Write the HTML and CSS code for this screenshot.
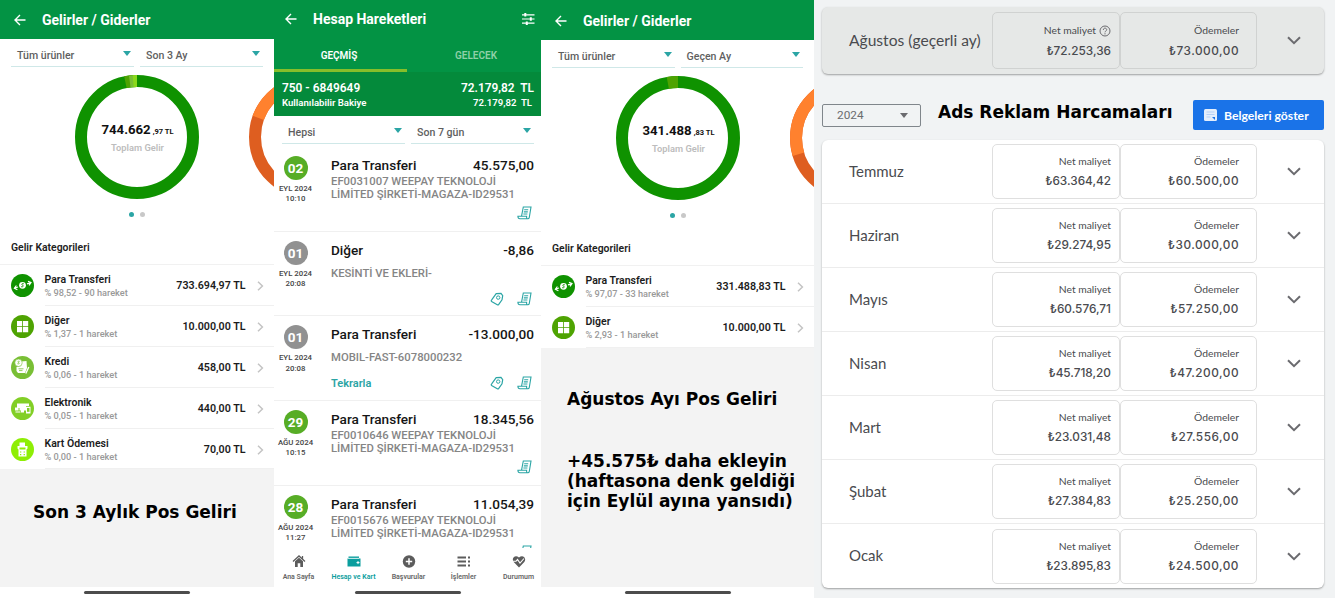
FILE: index.html
```html
<!DOCTYPE html>
<html lang="tr">
<head>
    <meta charset="UTF-8">
    <meta name="viewport" content="width=device-width, initial-scale=1.0">
    <title>Pos Geliri ve Reklam Harcamaları</title>
    <link rel="stylesheet" href="styles.css">
</head>
<body>

    <!-- Shared icons -->
    <svg class="sprite" width="0" height="0">
        <symbol id="back" viewBox="0 0 12 12"><path d="M11.5 6H1M6 1L1 6l5 5" fill="none" stroke="#fff" stroke-width="1.4"/></symbol>
        <symbol id="next" viewBox="0 0 7 10"><path d="M1 .8L5.4 5 1 9.2" fill="none" stroke="#c4c4c4" stroke-width="1.5"/></symbol>
        <symbol id="down" viewBox="0 0 14 9"><path d="M1 1.2l6 6 6-6" fill="none" stroke="#6b6b6f" stroke-width="2"/></symbol>
        <symbol id="transfer" viewBox="0 0 23 23">
            <circle cx="11.5" cy="11.5" r="11.5" fill="#0f9200"/>
            <circle cx="11.5" cy="11.3" r="3.4" fill="#fff"/>
            <path d="M12.8 9.8c-2-.9-2.7.9-1.3 1.3s1 2.2-1.4 1.6" fill="none" stroke="#0f9200" stroke-width=".9"/>
            <path d="M7 13l-3.500 1M5.400 11.500l-2 2.700 3 1.500M16 9.800l3.500-1M17 7.200l3 1.400-2 2.700" fill="none" stroke="#fff" stroke-width="1.2"/>
        </symbol>
        <symbol id="other" viewBox="0 0 23 23">
            <circle cx="11.5" cy="11.5" r="11.5" fill="#4ea302"/>
            <path d="M6 6h5.200v5.200H6zM12 6h5.200v5.200H12zM6 12h5.200v5.200H6zM12 12h5.200v5.200H12z" fill="#fff"/>
        </symbol>
        <symbol id="credit" viewBox="0 0 23 23">
            <circle cx="11.5" cy="11.5" r="11.5" fill="#79bf35"/>
            <path d="M10 5.500l5.500-.5.5 7-2 5H7l-1.500-2V11L10 10z" fill="#fff"/>
            <circle cx="7.500" cy="6.800" r="3.700" fill="#fff" stroke="#79bf35" stroke-width=".6"/>
            <path d="M8.600 5.400c-2-.6-2.200.8-1 1.200s.8 1.600-1.200 1.100M7.500 12.800h5M8 14.600h3.500" fill="none" stroke="#79bf35" stroke-width=".8"/>
            <path d="M17.800 11l-3 6.500" stroke="#fff" stroke-width="1.400"/>
        </symbol>
        <symbol id="electronic" viewBox="0 0 23 23">
            <circle cx="11.5" cy="11.5" r="11.5" fill="#82cf26"/>
            <path d="M6 6.500h12V9h-3v4.500H8.500V11H6zM10 13.500h3v2h-3zM4 10.500h3.500v3H4zM4.500 14.500h5v1h-5zM15 9.800h4.500v6.700H15z" fill="#fff"/>
            <path d="M16 11h2.500v3.800H16z" fill="#82cf26"/>
        </symbol>
        <symbol id="card" viewBox="0 0 23 23">
            <circle cx="11.5" cy="11.5" r="11.5" fill="#8eee05"/>
            <path d="M8.500 4.500h5.500v4H8.500zM6.500 8h10v2.500l-1 1v7h-8v-7l-1-1z" fill="#fff"/>
            <path d="M8.500 9.500h6v2h-6zM9 13.400h1.300v1.200H9zM12.600 13.400h1.300v1.200h-1.300zM9 16h1.300v1.200H9zM12.600 16h1.300v1.200h-1.300z" fill="#8eee05"/>
        </symbol>
        <symbol id="receipt" viewBox="0 0 15 14">
            <path d="M4.600 9.800L6.300 1H14l-1.700 10.300c-.3 2-2.800 2-2.700 0v-1H.9c0 1.700.7 2.500 2 2.500h7.800M7.200 3.800h4M6.800 5.900h4M6.400 8h4" fill="none" stroke="#2ba5a5" stroke-width="1.1"/>
        </symbol>
        <symbol id="tag" viewBox="0 0 14 14">
            <path d="M6.200 1.600l4.800-.2 1.700 2.200-.7 4.200-3.400 4.800c-.4.500-.8.500-1.300.2L1.600 9.400c-.4-.3-.5-.8-.1-1.300z" fill="none" stroke="#2ba5a5" stroke-width="1.2"/>
            <circle cx="8.200" cy="5.600" r="1.700" fill="none" stroke="#2ba5a5"/>
        </symbol>
    </svg>

    <section class="phone income">
        <header class="bar">
            <svg class="back"><use href="#back"/></svg>
            <h1>Gelirler / Giderler</h1>
        </header>
        <div class="filters">
            <div class="filter">Tüm ürünler</div>
            <div class="filter">Son 3 Ay</div>
        </div>
        <div class="chart">
            <svg width="274" height="140" viewBox="0 0 274 140">
                <circle cx="137" cy="70" r="56" fill="none" stroke="#0f9200" stroke-width="12"/>
                <g fill="none" stroke-width="12" transform="rotate(-90 137 70)">
                    <circle cx="137" cy="70" r="56" pathLength="360" stroke="#4ea302" stroke-dasharray="12 348" stroke-dashoffset="12"/>
                    <circle cx="137" cy="70" r="56" pathLength="360" stroke="#79bf35" stroke-dasharray="7.5 352.5" stroke-dashoffset="7.5"/>
                    <circle cx="137" cy="70" r="56" pathLength="360" stroke="#8bd91c" stroke-dasharray="4 356" stroke-dashoffset="4"/>
                </g>
                <g fill="none" stroke-width="12" transform="rotate(-90 311 70)">
                    <circle cx="311" cy="70" r="56" stroke="#de5e20"/>
                    <circle cx="311" cy="70" r="56" pathLength="360" stroke="#ff812e" stroke-dasharray="70 290" stroke-dashoffset="70"/>
                </g>
            </svg>
            <div class="total">
                <p class="sum">744.662<small>,97 TL</small></p>
                <p class="caption">Toplam Gelir</p>
            </div>
        </div>
        <div class="dots"><i class="on"></i><i></i></div>
        <h2>Gelir Kategorileri</h2>
        <ul class="categories">
            <li>
                <svg class="badge"><use href="#transfer"/></svg>
                <div class="line">
                    <div class="name"><b>Para Transferi</b><span>% 98,52 - 90 hareket</span></div>
                    <strong>733.694,97 TL</strong>
                    <svg class="next"><use href="#next"/></svg>
                </div>
            </li>
            <li>
                <svg class="badge"><use href="#other"/></svg>
                <div class="line">
                    <div class="name"><b>Diğer</b><span>% 1,37 - 1 hareket</span></div>
                    <strong>10.000,00 TL</strong>
                    <svg class="next"><use href="#next"/></svg>
                </div>
            </li>
            <li>
                <svg class="badge"><use href="#credit"/></svg>
                <div class="line">
                    <div class="name"><b>Kredi</b><span>% 0,06 - 1 hareket</span></div>
                    <strong>458,00 TL</strong>
                    <svg class="next"><use href="#next"/></svg>
                </div>
            </li>
            <li>
                <svg class="badge"><use href="#electronic"/></svg>
                <div class="line">
                    <div class="name"><b>Elektronik</b><span>% 0,05 - 1 hareket</span></div>
                    <strong>440,00 TL</strong>
                    <svg class="next"><use href="#next"/></svg>
                </div>
            </li>
            <li>
                <svg class="badge"><use href="#card"/></svg>
                <div class="line">
                    <div class="name"><b>Kart Ödemesi</b><span>% 0,00 - 1 hareket</span></div>
                    <strong>70,00 TL</strong>
                    <svg class="next"><use href="#next"/></svg>
                </div>
            </li>
        </ul>
        <div class="notes">
            <p class="note">Son 3 Aylık Pos Geliri</p>
        </div>
        <div class="home"></div>
    </section>

    <section class="phone account">
        <header class="bar">
            <svg class="back"><use href="#back"/></svg>
            <h1>Hesap Hareketleri</h1>
            <svg class="tune" viewBox="0 0 13 12"><path d="M0 1.800h12.500M0 6h12.500M0 10.200h12.500" stroke="#fff" stroke-width="1.2"/><path d="M3.300 0v3.600M8.800 4.200v3.600M4.800 8.400V12" stroke="#fff" stroke-width="2"/></svg>
        </header>
        <nav class="tabs">
            <a class="active">GEÇMİŞ</a>
            <a>GELECEK</a>
        </nav>
        <div class="balance">
            <div class="row big"><span>750 - 6849649</span><span>72.179,82&nbsp; TL</span></div>
            <div class="row"><span>Kullanılabilir Bakiye</span><span>72.179,82&nbsp; TL</span></div>
        </div>
        <div class="filters">
            <div class="filter">Hepsi</div>
            <div class="filter">Son 7 gün</div>
        </div>
        <div class="moves">
            <article class="move">
                <div class="date"><b class="in">02</b><span>EYL 2024</span><span>10:10</span></div>
                <div class="info">
                    <div class="head"><span>Para Transferi</span><span>45.575,00</span></div>
                    <p>EF0031007 WEEPAY TEKNOLOJİ<br>LİMİTED ŞİRKETİ-MAGAZA-ID29531</p>
                    <div class="tools"><svg class="receipt"><use href="#receipt"/></svg></div>
                </div>
            </article>
            <article class="move single">
                <div class="date"><b>01</b><span>EYL 2024</span><span>20:08</span></div>
                <div class="info">
                    <div class="head"><span>Diğer</span><span>-8,86</span></div>
                    <p>KESİNTİ VE EKLERİ-</p>
                    <div class="tools"><svg class="tag"><use href="#tag"/></svg><svg class="receipt"><use href="#receipt"/></svg></div>
                </div>
            </article>
            <article class="move single">
                <div class="date"><b>01</b><span>EYL 2024</span><span>20:08</span></div>
                <div class="info">
                    <div class="head"><span>Para Transferi</span><span>-13.000,00</span></div>
                    <p>MOBIL-FAST-6078000232</p>
                    <div class="tools"><a>Tekrarla</a><svg class="tag"><use href="#tag"/></svg><svg class="receipt"><use href="#receipt"/></svg></div>
                </div>
            </article>
            <article class="move">
                <div class="date"><b class="in">29</b><span>AĞU 2024</span><span>10:15</span></div>
                <div class="info">
                    <div class="head"><span>Para Transferi</span><span>18.345,56</span></div>
                    <p>EF0010646 WEEPAY TEKNOLOJİ<br>LİMİTED ŞİRKETİ-MAGAZA-ID29531</p>
                    <div class="tools"><svg class="receipt"><use href="#receipt"/></svg></div>
                </div>
            </article>
            <article class="move">
                <div class="date"><b class="in">28</b><span>AĞU 2024</span><span>11:27</span></div>
                <div class="info">
                    <div class="head"><span>Para Transferi</span><span>11.054,39</span></div>
                    <p>EF0015676 WEEPAY TEKNOLOJİ<br>LİMİTED ŞİRKETİ-MAGAZA-ID29531</p>
                    <div class="tools"><svg class="receipt"><use href="#receipt"/></svg></div>
                </div>
            </article>
        </div>
        <nav class="menu">
            <a>
                <svg viewBox="0 0 14 14"><path d="M1 7.500L7 2l6 5.500M10.500 2v3" fill="none" stroke="#5c5c5c" stroke-width="1.300"/><path d="M3 7.300l4-3.500 4 3.500V13H8.300V9.300H5.700V13H3z" fill="#5c5c5c"/></svg>
                Ana Sayfa
            </a>
            <a class="active">
                <svg viewBox="0 0 14 14"><path d="M1.500 2.500H12V4H1.500zM.5 4.600h13v8H.5z" fill="#0a9e9e"/><path d="M1 4.300h11" stroke="#fff" stroke-width=".6"/><path d="M9.500 8.600h3M11 7.100v3" stroke="#fff"/></svg>
                Hesap ve Kart
            </a>
            <a>
                <svg viewBox="0 0 14 14"><circle cx="7" cy="7.500" r="6.200" fill="#5c5c5c"/><path d="M3.800 7.500h6.400M7 4.300v6.400" stroke="#fff" stroke-width="1.500"/></svg>
                Başvurular
            </a>
            <a>
                <svg viewBox="0 0 14 14"><path d="M.5 3.500H9M.5 7.500H9M.5 11.500H9M11 3.500h2M11 7.500h2M11 11.500h2" stroke="#5c5c5c" stroke-width="1.800"/></svg>
                İşlemler
            </a>
            <a>
                <svg viewBox="0 0 14 14"><path d="M7 13.500L1.700 8C-1 4.500 3 .2 7 3.500 11 .2 15 4.500 12.300 8z" fill="#5c5c5c"/><path d="M1 7.300h3L5.500 5.500l2.500 3.500 4-4.500" fill="none" stroke="#fff" stroke-width="1.100"/></svg>
                Durumum
            </a>
        </nav>
        <div class="home"></div>
    </section>

    <section class="phone income month">
        <header class="bar">
            <svg class="back"><use href="#back"/></svg>
            <h1>Gelirler / Giderler</h1>
        </header>
        <div class="filters">
            <div class="filter">Tüm ürünler</div>
            <div class="filter">Geçen Ay</div>
        </div>
        <div class="chart">
            <svg width="273" height="140" viewBox="0 0 273 140">
                <circle cx="137" cy="70" r="56" fill="none" stroke="#0f9200" stroke-width="12"/>
                <g fill="none" stroke-width="12" transform="rotate(-90 137 70)">
                    <circle cx="137" cy="70" r="56" pathLength="360" stroke="#4ea302" stroke-dasharray="10.5 349.5" stroke-dashoffset="10.5"/>
                </g>
                <g fill="none" stroke-width="12" transform="rotate(-90 311 70)">
                    <circle cx="311" cy="70" r="56" stroke="#de5e20"/>
                    <circle cx="311" cy="70" r="56" pathLength="360" stroke="#ff812e" stroke-dasharray="107 253" stroke-dashoffset="107"/>
                </g>
            </svg>
            <div class="total">
                <p class="sum">341.488<small>,83 TL</small></p>
                <p class="caption">Toplam Gelir</p>
            </div>
        </div>
        <div class="dots"><i class="on"></i><i></i></div>
        <h2>Gelir Kategorileri</h2>
        <ul class="categories">
            <li>
                <svg class="badge"><use href="#transfer"/></svg>
                <div class="line">
                    <div class="name"><b>Para Transferi</b><span>% 97,07 - 33 hareket</span></div>
                    <strong>331.488,83 TL</strong>
                    <svg class="next"><use href="#next"/></svg>
                </div>
            </li>
            <li>
                <svg class="badge"><use href="#other"/></svg>
                <div class="line">
                    <div class="name"><b>Diğer</b><span>% 2,93 - 1 hareket</span></div>
                    <strong>10.000,00 TL</strong>
                    <svg class="next"><use href="#next"/></svg>
                </div>
            </li>
        </ul>
        <div class="notes">
            <p class="note">Ağustos Ayı Pos Geliri</p>
            <p class="note">+45.575₺ daha ekleyin<br>(haftasona denk geldiği<br>için Eylül ayına yansıdı)</p>
        </div>
        <div class="home"></div>
    </section>

    <section class="ads">
        <div class="months current">
            <div class="item">
                <span class="title">Ağustos (geçerli ay)</span>
                <div class="cell">
                    <span>Net maliyet <svg class="help" viewBox="0 0 12 12"><circle cx="6" cy="6" r="5" fill="none" stroke="#6b6b6f"/><path d="M4.300 4.900c0-2.400 3.400-2.200 3.400-.2C7.700 6 6 6 6 7.300M6 8.200v1.200" fill="none" stroke="#6b6b6f"/></svg></span>
                    <b>₺72.253,36</b>
                </div>
                <div class="cell wide"><span>Ödemeler</span><b>₺73.000,00</b></div>
                <svg class="down"><use href="#down"/></svg>
            </div>
        </div>
        <div class="controls">
            <div class="year">2024</div>
            <p class="note">Ads Reklam Harcamaları</p>
            <button class="docs">
                <svg viewBox="0 0 13 12"><rect width="13" height="12" rx="1.500" fill="#e4eefc"/><path d="M2.500 3h8M2.500 5.500h8M2.500 8h4" stroke="#b5d0f7"/><path d="M8 8h3v3z" fill="#1a73e8"/></svg>
                Belgeleri göster
            </button>
        </div>
        <div class="months">
            <div class="item">
                <span class="title">Temmuz</span>
                <div class="cell"><span>Net maliyet</span><b>₺63.364,42</b></div>
                <div class="cell wide"><span>Ödemeler</span><b>₺60.500,00</b></div>
                <svg class="down"><use href="#down"/></svg>
            </div>
            <div class="item">
                <span class="title">Haziran</span>
                <div class="cell"><span>Net maliyet</span><b>₺29.274,95</b></div>
                <div class="cell wide"><span>Ödemeler</span><b>₺30.000,00</b></div>
                <svg class="down"><use href="#down"/></svg>
            </div>
            <div class="item">
                <span class="title">Mayıs</span>
                <div class="cell"><span>Net maliyet</span><b>₺60.576,71</b></div>
                <div class="cell wide"><span>Ödemeler</span><b>₺57.250,00</b></div>
                <svg class="down"><use href="#down"/></svg>
            </div>
            <div class="item">
                <span class="title">Nisan</span>
                <div class="cell"><span>Net maliyet</span><b>₺45.718,20</b></div>
                <div class="cell wide"><span>Ödemeler</span><b>₺47.200,00</b></div>
                <svg class="down"><use href="#down"/></svg>
            </div>
            <div class="item">
                <span class="title">Mart</span>
                <div class="cell"><span>Net maliyet</span><b>₺23.031,48</b></div>
                <div class="cell wide"><span>Ödemeler</span><b>₺27.556,00</b></div>
                <svg class="down"><use href="#down"/></svg>
            </div>
            <div class="item">
                <span class="title">Şubat</span>
                <div class="cell"><span>Net maliyet</span><b>₺27.384,83</b></div>
                <div class="cell wide"><span>Ödemeler</span><b>₺25.250,00</b></div>
                <svg class="down"><use href="#down"/></svg>
            </div>
            <div class="item">
                <span class="title">Ocak</span>
                <div class="cell"><span>Net maliyet</span><b>₺23.895,83</b></div>
                <div class="cell wide"><span>Ödemeler</span><b>₺24.500,00</b></div>
                <svg class="down"><use href="#down"/></svg>
            </div>
        </div>
    </section>

</body>
</html>
```

FILE: styles.css
```css
* {
    box-sizing: border-box;
    margin: 0;
    padding: 0;
}

body {
    display: flex;
    width: 1335px;
    height: 598px;
    overflow: hidden;
    font-family: Roboto, "Liberation Sans", sans-serif;
    background-color: #f1f3f4;
    color: #1c1c1c;
}

svg {
    display: block;
    flex: none;
}

.sprite {
    position: absolute;
}

/* Phone screens */
.phone {
    display: flex;
    flex-direction: column;
    flex: none;
    width: 274px;
    height: 598px;
    overflow: hidden;
    background-color: #fff;
}

.account {
    width: 267px;
}

.month {
    width: 273px;
}

.bar {
    display: flex;
    align-items: center;
    flex: none;
    height: 39px;
    padding-left: 14px;
    background-color: #039344;
    color: #fff;
}

.month .bar {
    height: 40px;
    padding-top: 2px;
}

.account .bar {
    padding: 0 6px 1px 11px;
}

.back {
    width: 12px;
    height: 12px;
}

.bar h1 {
    flex: 1;
    margin-left: 16px;
    font-size: 14px;
    font-weight: 700;
}

.tune {
    width: 13px;
    height: 12px;
}

.filters {
    display: flex;
    flex: none;
    gap: 6px;
    height: 28px;
    padding: 0 11px;
}

.account .filters {
    padding: 0 7px 0 8px;
}

.filter {
    display: flex;
    align-items: center;
    justify-content: space-between;
    flex: 1;
    padding: 5px 3px 0 6px;
    border-bottom: 1px solid #cfe8e8;
    font-size: 10.6px;
    font-weight: 500;
    color: #5f5f5f;
}

.filter::after {
    content: "";
    margin-bottom: 4px;
    border: 4px solid transparent;
    border-top: 5px solid #2ba5a5;
    border-bottom: 0;
}

.chart {
    position: relative;
    flex: none;
    height: 140px;
}

.total {
    position: absolute;
    top: 55px;
    left: 0;
    width: 275px;
    text-align: center;
}

.sum {
    font-size: 13.2px;
    line-height: 16px;
    font-weight: 700;
    color: #111;
}

.sum small {
    margin-left: 2px;
    font-size: 7.5px;
}

.caption {
    margin-top: 2px;
    font-size: 9.3px;
    line-height: 12px;
    font-weight: 600;
    color: #bdbdbd;
}

.dots {
    display: flex;
    justify-content: center;
    flex: none;
    gap: 6px;
    height: 26px;
    padding-top: 5px;
}

.dots i {
    width: 5px;
    height: 5px;
    border-radius: 50%;
    background-color: #c8c8c8;
}

.dots .on {
    background-color: #2ba5a5;
}

.income h2 {
    flex: none;
    height: 32px;
    padding: 7px 11px 0;
    border-bottom: 1px solid #f1f1f1;
    font-size: 10.4px;
    line-height: 15px;
    font-weight: 600;
    color: #222;
}

.categories {
    flex: none;
    list-style: none;
}

.categories li {
    display: flex;
    align-items: center;
    gap: 10.5px;
    height: 40.9px;
    padding-left: 11px;
}

.badge {
    width: 23px;
    height: 23px;
}

.line {
    display: flex;
    align-items: center;
    flex: 1;
    height: 100%;
    padding: 2px 10.5px 0 0;
    border-bottom: 1px solid #f0f0f0;
}

.name {
    flex: 1;
}

.name b {
    display: block;
    font-size: 10.5px;
    line-height: 13px;
    font-weight: 600;
}

.name span {
    display: block;
    font-size: 9.2px;
    line-height: 13px;
    font-weight: 500;
    color: #999;
}

.line strong {
    font-size: 10.7px;
    font-weight: 600;
}

.next {
    width: 7px;
    height: 10px;
    margin-left: 11px;
}

.notes {
    flex: 1;
    padding: 33px 0 0 33px;
    background-color: #f3f3f3;
}

.month .notes {
    padding: 41px 0 0 26px;
}

.note {
    font-family: "DejaVu Sans", sans-serif;
    font-size: 17px;
    line-height: 20px;
    font-weight: 700;
    color: #000;
    white-space: nowrap;
}

.notes .note + .note {
    margin-top: 42px;
}

/* Gesture bar at the bottom of the phone */
.home {
    display: flex;
    justify-content: center;
    flex: none;
    height: 11px;
    padding-top: 4px;
}

.home::after {
    content: "";
    width: 106px;
    height: 3px;
    border-radius: 2px;
    background-color: #4c4c4c;
}

/* Account screen */
.tabs {
    display: flex;
    flex: none;
    height: 33px;
    background-color: #039344;
}

.tabs a {
    flex: 1;
    padding-left: 4px;
    font-size: 10px;
    line-height: 33px;
    font-weight: 600;
    text-align: center;
    color: #8fd0a8;
}

.tabs .active {
    padding: 0 3px 0 0;
    border-bottom: 3px solid #86be2a;
    color: #fff;
}

.balance {
    flex: none;
    height: 44px;
    padding: 9px 7px 0 8px;
    background-color: #048a3b;
    color: #fff;
}

.balance .row {
    display: flex;
    justify-content: space-between;
    padding-right: 2px;
    font-size: 9.6px;
    line-height: 14px;
    font-weight: 600;
}

.balance .big {
    padding-right: 0;
    font-size: 11.9px;
    line-height: 15px;
}

.moves {
    flex: 1;
    min-height: 0;
    padding-top: 3px;
    overflow: hidden;
}

.move {
    display: flex;
    height: 84.7px;
    border-bottom: 1px solid #f0f0f0;
}

.date {
    display: flex;
    flex-direction: column;
    align-items: center;
    width: 43px;
    padding-top: 9px;
    font-size: 7.8px;
    line-height: 10.4px;
    font-weight: 500;
    color: #444;
}

.date b {
    width: 24px;
    height: 24px;
    margin-bottom: 4px;
    border-radius: 50%;
    background-color: #919191;
    font-size: 13.5px;
    line-height: 24px;
    text-align: center;
    color: #fff;
}

.date .in {
    background-color: #57ad26;
}

.info {
    display: flex;
    flex-direction: column;
    flex: 1;
    padding: 10px 7px 0 14px;
}

.head {
    display: flex;
    justify-content: space-between;
    font-size: 13.6px;
    line-height: 17px;
    font-weight: 500;
    color: #151515;
}

.info p {
    margin-top: 1px;
    font-size: 11.3px;
    line-height: 13px;
    font-weight: 500;
    color: #858585;
    white-space: nowrap;
}

.single p {
    margin-top: 8px;
}

.single .tools {
    margin-top: 12px;
}

.tools {
    display: flex;
    align-items: center;
    justify-content: flex-end;
    gap: 13px;
    height: 14px;
    margin-top: 5px;
    padding-right: 2px;
}

.tools a {
    flex: 1;
    font-size: 11px;
    font-weight: 600;
    color: #2ba5a5;
}

.receipt {
    width: 15px;
    height: 14px;
}

.tag {
    width: 14px;
    height: 14px;
}

.menu {
    display: flex;
    flex: none;
    height: 39px;
    margin: 0 -5px 0 -3px;
    padding-top: 6px;
    background-color: #fff;
}

.menu a {
    display: flex;
    flex-direction: column;
    align-items: center;
    flex: 1;
    font-size: 7px;
    line-height: 9px;
    font-weight: 600;
    color: #666;
    white-space: nowrap;
}

.menu svg {
    width: 14px;
    height: 14px;
    margin-bottom: 5px;
}

.menu .active {
    color: #0a9e9e;
}

/* Ad spending */
.ads {
    flex: 1;
    padding: 7px 11px 0 8px;
    color: #4a4b4f;
}

.months {
    border-radius: 6px;
    background-color: #fff;
    box-shadow: 0 1px 2px rgba(0, 0, 0, .35);
}

.item {
    display: flex;
    align-items: center;
    height: 64px;
    padding-right: 23px;
    border-bottom: 1px solid #ececec;
}

.item:last-child {
    border-bottom: 0;
}

.title {
    flex: 1;
    padding: 0 0 2px 27px;
    font-family: Lato, sans-serif;
    font-size: 15px;
    white-space: nowrap;
}

.cell {
    display: flex;
    flex-direction: column;
    align-items: flex-end;
    width: 128.5px;
    height: 55px;
    padding: 10px 8px 0 0;
    border: 1px solid #dfdfdf;
    border-radius: 5px;
}

.cell.wide {
    width: 137px;
    padding-right: 17px;
    margin-right: 30px;
}

.cell span {
    display: flex;
    align-items: center;
    gap: 3px;
    font-family: Lato, sans-serif;
    font-size: 10.3px;
    line-height: 13px;
}

.cell b {
    margin-top: 6px;
    font-family: Inter, sans-serif;
    font-size: 11.8px;
    line-height: 15px;
    font-weight: 500;
}

.cell.wide b {
    letter-spacing: .5px;
}

.help {
    width: 12px;
    height: 12px;
}

.down {
    width: 14px;
    height: 9px;
}

.current {
    background-color: #e6e8e7;
}

.current .item {
    height: 67px;
}

.current .title {
    font-size: 15.6px;
}

.current .cell {
    height: 57px;
    padding-top: 11px;
    border-color: #d0d2d1;
}

.current .cell b {
    margin-top: 7px;
}

.controls {
    display: flex;
    align-items: center;
    height: 30px;
    margin: 26px 0 10px;
}

.year {
    display: flex;
    align-items: center;
    justify-content: space-between;
    width: 99px;
    height: 23px;
    padding: 0 12px 0 14px;
    border: 1px solid #80868b;
    border-radius: 2px;
    font-size: 11.8px;
    color: #6b6b6f;
}

.year::after {
    content: "";
    border: 4px solid transparent;
    border-top: 5px solid #6b6b6f;
    border-bottom: 0;
}

.controls .note {
    flex: 1;
    margin-left: 17px;
    padding-bottom: 7px;
}

.docs {
    display: flex;
    align-items: center;
    gap: 7px;
    width: 131px;
    height: 30px;
    padding-left: 11px;
    border: 0;
    border-radius: 2px;
    background-color: #1a73e8;
    font-family: Lato, sans-serif;
    font-size: 12.2px;
    font-weight: 700;
    color: #fff;
    white-space: nowrap;
}

.docs svg {
    width: 13px;
    height: 12px;
}
```
